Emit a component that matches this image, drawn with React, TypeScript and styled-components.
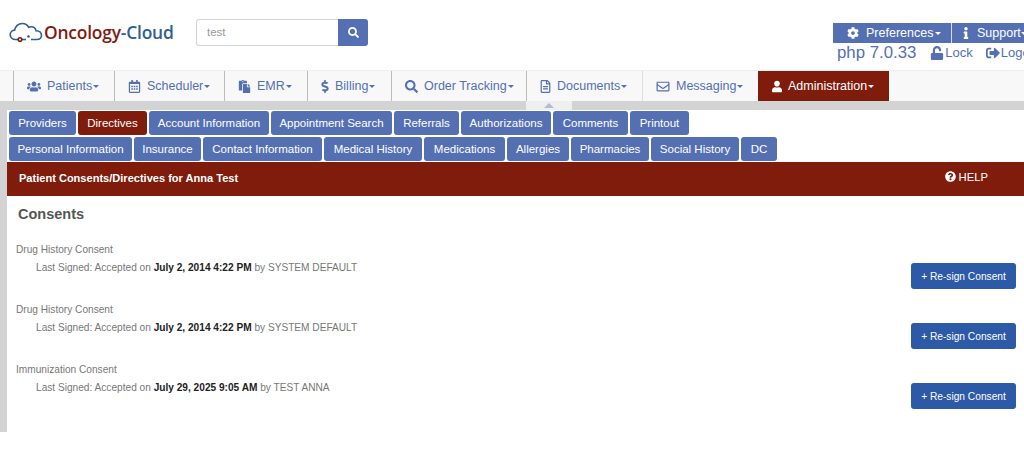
import React from "react";
import styled, { createGlobalStyle } from "styled-components";
import {
  FaUsers, FaRegCalendarAlt, FaPaste, FaDollarSign, FaSearch, FaRegFileAlt, FaRegEnvelope,
  FaUser, FaCog, FaInfo, FaUnlock, FaSignOutAlt, FaQuestionCircle,
} from "react-icons/fa";

const Global = createGlobalStyle`
  html, body { margin: 0; padding: 0; background: #fff; overflow: hidden; }
  body { font-family: "Liberation Sans", Arial, sans-serif; width: 1024px; height: 451px; }
  * { box-sizing: border-box; }
`;

const Page = styled.div`width: 1024px; height: 451px; overflow: hidden; background: #fff;`;

const Header = styled.header`
  height: 70px; display: flex; align-items: flex-start; overflow: hidden;
`;
const Logo = styled.div`
  flex: 0 0 187px; display: flex; align-items: center; margin: 20px 0 0 9px; height: 24px;
`;
const LogoText = styled.span`
  font-family: "Open Sans", sans-serif; font-weight: 600; font-size: 17.4px; letter-spacing: -0.2px;
  line-height: 22px; color: #7f1c10; margin: -1px 0 0 0; white-space: nowrap;
`;
const LogoBlue = styled.span`color: #2f5f93;`;
const SearchBox = styled.div`flex: 0 0 172px; display: flex; margin-top: 19px; height: 27px;`;
const SearchInput = styled.div`
  flex: 1; border: 1px solid #d4d4d4; border-right: none; border-radius: 3px 0 0 3px;
  font-size: 11.5px; color: #999; padding: 0 10px; line-height: 25px; background: #fff;
`;
const SearchButton = styled.div`
  width: 30px; background: #5470b2; color: #fff; border-radius: 0 3px 3px 0;
  display: flex; align-items: center; justify-content: center; font-size: 11px;
`;
const HeaderRight = styled.div`
  margin: 23px 0 0 465px; flex: 0 0 230px; display: flex; flex-direction: column;
`;
const TopButtons = styled.div`display: flex; height: 20px;`;
const TopButton = styled.div<{ $w: number; $pad: number; $gap: number }>`
  width: ${(p) => p.$w}px; flex: none; background: #5470b2; color: #fff; font-size: 12.5px;
  display: flex; align-items: center; gap: ${(p) => p.$gap}px; padding-left: ${(p) => p.$pad}px;
  border-right: 1px solid #d9deea; white-space: nowrap;
  svg { font-size: 12px; }
`;
const StatusRow = styled.div`display: flex; align-items: center; color: #5470b2; height: 19px; white-space: nowrap;`;
const Php = styled.span`font-size: 16.8px; margin: 0 14px 0 4px;`;
const StatusLink = styled.span`
  font-size: 13px; display: inline-flex; align-items: center; gap: 1px; margin-right: 13px;
  svg { font-size: 14px; }
`;

const Nav = styled.nav`
  height: 31px; background: #f8f8f8; border-top: 1px solid #eee; display: flex; padding-left: 13px;
`;
const NavItem = styled.div<{ $w: number; $active?: boolean; $dark?: boolean }>`
  width: ${(p) => p.$w}px; flex: none; display: flex; align-items: center; gap: 6px; padding-left: 13px;
  font-size: 12.5px; color: ${(p) => (p.$dark ? "#fff" : "#5470b2")};
  background: ${(p) => (p.$dark ? "#7f1c0c" : "transparent")};
  border-left: 1px solid ${(p) => (p.$dark ? "#7f1c0c" : p.$active ? "#ddd" : "#bbb")};
  white-space: nowrap;
`;
const NavIcon = styled.span<{ $w: number }>`
  width: ${(p) => p.$w}px; flex: none; display: flex; align-items: center; justify-content: center;
  svg { width: 100%; height: 13px; }
`;
const Caret = styled.i`
  display: inline-block; flex: none; width: 0; height: 0; margin-left: -5px;
  border-left: 3.5px solid transparent; border-right: 3.5px solid transparent; border-top: 3.5px solid currentColor;
`;
const GrayBar = styled.div`height: 9px; background: #d3d3d3; padding-left: 526px;`;
const ArrowCell = styled.div`
  width: 46px; height: 9px; background: #efefef; display: flex; justify-content: center; padding-top: 2px;
  &::after { content: ""; width: 0; height: 0; border-left: 5px solid transparent; border-right: 5px solid transparent; border-bottom: 5px solid #b4bcd2; }
`;
const Body = styled.div`display: flex; height: 322px;`;
const Side = styled.div`width: 7px; flex: none; background: #d3d3d3;`;
const Main = styled.main`flex: 1; min-width: 0;`;
const TabRow = styled.div`display: flex; gap: 2px; padding: 1px 0 0 2px; height: 26px;`;
const Tab = styled.div<{ $active?: boolean; $w: number }>`
  width: ${(p) => p.$w}px; height: 24px; flex: none; border-radius: 3px; font-size: 11.5px; color: #fff;
  background: ${(p) => (p.$active ? "#7f1c0c" : "#5470b2")};
  display: flex; align-items: center; justify-content: center; white-space: nowrap;
`;
const Banner = styled.div`
  height: 34px; background: #7f1c0c; color: #fff; display: flex; align-items: center;
  justify-content: space-between; padding: 0 36px 3px 12px; font-size: 11.05px; font-weight: 700;
`;
const Help = styled.span`
  font-weight: 400; font-size: 11.3px; display: inline-flex; align-items: center; gap: 2px; position: relative; top: -1px;
  svg { font-size: 11px; }
`;
const Heading = styled.h2`
  margin: 0; padding: 10px 0 0 11px; font-size: 14.5px; line-height: 16px; color: #555; height: 44px; font-weight: 700;
`;
const Row = styled.div`
  height: 60px; display: flex; justify-content: space-between; padding: 0 8px 0 9px; color: #777; font-size: 10.15px;
`;
const Texts = styled.div`padding-top: 3px;`;
const Title = styled.div`line-height: 14px;`;
const Signed = styled.div`line-height: 14px; margin: 4px 0 0 20px; b { color: #222; }`;
const Resign = styled.div`
  width: 105px; height: 26px; margin-top: 23px; background: #2d5aa6; color: #fff; border-radius: 3px;
  display: flex; align-items: center; justify-content: center; font-size: 10.2px;
`;

const row1: [string, number, boolean?][] = [
  ["Providers", 67], ["Directives", 69, true], ["Account Information", 120], ["Appointment Search", 121],
  ["Referrals", 65], ["Authorizations", 90], ["Comments", 75], ["Printout", 59],
];
const row2: [string, number][] = [
  ["Personal Information", 123], ["Insurance", 67], ["Contact Information", 119], ["Medical History", 98],
  ["Medications", 81], ["Allergies", 62], ["Pharmacies", 78], ["Social History", 88], ["DC", 36],
];
const nav: [string, React.ReactNode, number, number][] = [
  ["Patients", <FaUsers />, 101, 14], ["Scheduler", <FaRegCalendarAlt />, 110, 13], ["EMR", <FaPaste />, 83, 13],
  ["Billing", <FaDollarSign />, 84, 8], ["Order Tracking", <FaSearch />, 135, 13], ["Documents", <FaRegFileAlt />, 116, 11],
  ["Messaging", <FaRegEnvelope />, 116, 14],
];
const consents = [
  ["Drug History Consent", "July 2, 2014 4:22 PM", "SYSTEM DEFAULT"],
  ["Drug History Consent", "July 2, 2014 4:22 PM", "SYSTEM DEFAULT"],
  ["Immunization Consent", "July 29, 2025 9:05 AM", "TEST ANNA"],
];

export default function App() {
  return (
    <Page>
      <Global />
      <Header>
        <Logo>
          <svg width="35" height="20" viewBox="0 0 35 20" fill="none" stroke="#2f5f93" strokeWidth="1.6">
            <path d="M9 17.5H6.5C3.5 17.5 1.2 15.4 1.2 12.7C1.2 10.2 3.2 8.3 5.6 8.1C6.2 4.3 9.4 1.5 13.2 1.5C16 1.5 18.4 3 19.7 5.3C20.5 4.9 21.3 4.7 22.2 4.7C24.6 4.7 26.6 6.4 27 8.7C30 8.9 32.5 10.6 32.5 13.2C32.5 15.8 30.6 17.5 27.6 17.5H22" />
            <path d="M13 17.5H17" />
            <circle cx="11" cy="17.5" r="1.8" stroke="#7f1c10" />
            <circle cx="19.5" cy="14.5" r="1.3" fill="#2f5f93" stroke="none" />
          </svg>
          <LogoText>Oncology<LogoBlue>-Cloud</LogoBlue></LogoText>
        </Logo>
        <SearchBox>
          <SearchInput>test</SearchInput>
          <SearchButton><FaSearch /></SearchButton>
        </SearchBox>
        <HeaderRight>
          <TopButtons>
            <TopButton $w={119} $pad={14} $gap={7}><FaCog />Preferences<Caret /></TopButton>
            <TopButton $w={111} $pad={8} $gap={5}><FaInfo />Support<Caret /></TopButton>
          </TopButtons>
          <StatusRow>
            <Php>php 7.0.33</Php>
            <StatusLink><FaUnlock />Lock</StatusLink>
            <StatusLink><FaSignOutAlt />Logout</StatusLink>
          </StatusRow>
        </HeaderRight>
      </Header>
      <Nav>
        {nav.map(([label, icon, w, iw]) => (
          <NavItem key={label} $w={w} $active={label === "Messaging"}>
            <NavIcon $w={iw}>{icon}</NavIcon>{label}<Caret />
          </NavItem>
        ))}
        <NavItem $w={131} $dark><NavIcon $w={10}><FaUser /></NavIcon>Administration<Caret /></NavItem>
      </Nav>
      <GrayBar><ArrowCell /></GrayBar>
      <Body>
        <Side />
        <Main>
          <TabRow>
            {row1.map(([t, w, a]) => <Tab key={t} $w={w} $active={a}>{t}</Tab>)}
          </TabRow>
          <TabRow>
            {row2.map(([t, w]) => <Tab key={t} $w={w}>{t}</Tab>)}
          </TabRow>
          <Banner>
            <span>Patient Consents/Directives for Anna Test</span>
            <Help><FaQuestionCircle />HELP</Help>
          </Banner>
          <Heading>Consents</Heading>
          {consents.map(([title, date, by], i) => (
            <Row key={i}>
              <Texts>
                <Title>{title}</Title>
                <Signed>Last Signed: Accepted on <b>{date}</b> by {by}</Signed>
              </Texts>
              <Resign>+ Re-sign Consent</Resign>
            </Row>
          ))}
        </Main>
      </Body>
    </Page>
  );
}
